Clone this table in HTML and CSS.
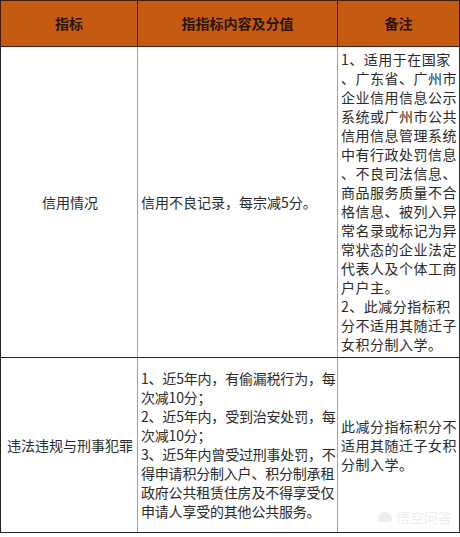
FILE: index.html
```html
<!DOCTYPE html>
<html lang="zh">
<head>
<meta charset="utf-8">
<link rel="stylesheet" href="styles.css">
</head>
<body>
<div class="wrap">
<table class="tbl">
  <colgroup>
    <col class="c1"><col class="c2"><col class="c3">
  </colgroup>
  <thead>
    <tr>
      <th>指标</th>
      <th>指指标内容及分值</th>
      <th>备注</th>
    </tr>
  </thead>
  <tbody>
    <tr class="r1">
      <td class="center">信用情况</td>
      <td class="left">信用不良记录，每宗减5分。</td>
      <td class="left note wide">1、适用于在国家<br>、广东省、广州市<br>企业信用信息公示<br>系统或广州市公共<br>信用信息管理系统<br>中有行政处罚信息<br>、不良司法信息、<br>商品服务质量不合<br>格信息、被列入异<br>常名录或标记为异<br>常状态的企业法定<br>代表人及个体工商<br>户户主。<br>2、此减分指标积<br>分不适用其随迁子<br>女积分制入学。</td>
    </tr>
    <tr class="r2">
      <td class="center">违法违规与刑事犯罪</td>
      <td class="left note tight">1、近5年内，有偷漏税行为，每<br>次减10分；<br>2、近5年内，受到治安处罚，每<br>次减10分；<br>3、近5年内曾受过刑事处罚，不<br>得申请积分制入户、积分制承租<br>政府公共租赁住房及不得享受仅<br>申请人享受的其他公共服务。</td>
      <td class="left note wide">此减分指标积分不<br>适用其随迁子女积<br>分制入学。</td>
    </tr>
  </tbody>
</table>
<div class="mark"><span class="mark-icon"></span>悟空问答</div>
</div>
</body>
</html>
```
FILE: styles.css
```css
html, body {
  margin: 0;
  padding: 0;
  background: #ffffff;
}
body {
  font-family: "Noto Sans CJK SC", "Noto Sans", sans-serif;
  color: #2a2a2a;
}
.wrap {
  position: relative;
  width: 460px;
}
.tbl {
  border-collapse: collapse;
  table-layout: fixed;
  width: 459px;
  font-size: 14px;
  line-height: 19px;
}
.c1 { width: 137px; }
.c2 { width: 200px; }
.c3 { width: 122px; }
.tbl th {
  background: #c55a11;
  color: #2b1406;
  font-weight: bold;
  font-size: 14px;
  height: 45px;
  padding: 0;
  border: 1px solid #3a2010;
  text-align: center;
  vertical-align: middle;
}
.tbl td {
  border-top: 1px solid #222;
  border-bottom: 1px solid #222;
  border-left: 1px solid #a0a0a0;
  border-right: 1px solid #a0a0a0;
  vertical-align: middle;
  padding: 3px 1px 3px 3px;
}
.tbl td:first-child { border-left: 1.5px solid #222; }
.tbl td:last-child { border-right: 1.5px solid #333; }
.tbl .r2 td { border-bottom: 1.5px solid #222; }
.r1 td { height: 304px; }
.r2 td { height: 168px; }
.center { text-align: center; }
.left { text-align: left; }
.note { white-space: nowrap; }
.wide { letter-spacing: 0.5px; }
.tight { letter-spacing: -0.2px; }
.mark {
  position: absolute;
  right: 8px;
  bottom: 6px;
  font-size: 14px;
  color: rgba(215, 215, 215, 0.45);
  display: flex;
  align-items: center;
  gap: 4px;
}
.mark-icon {
  width: 14px;
  height: 10px;
  border-radius: 7px 7px 3px 3px;
  background: rgba(215, 215, 215, 0.45);
}
```
